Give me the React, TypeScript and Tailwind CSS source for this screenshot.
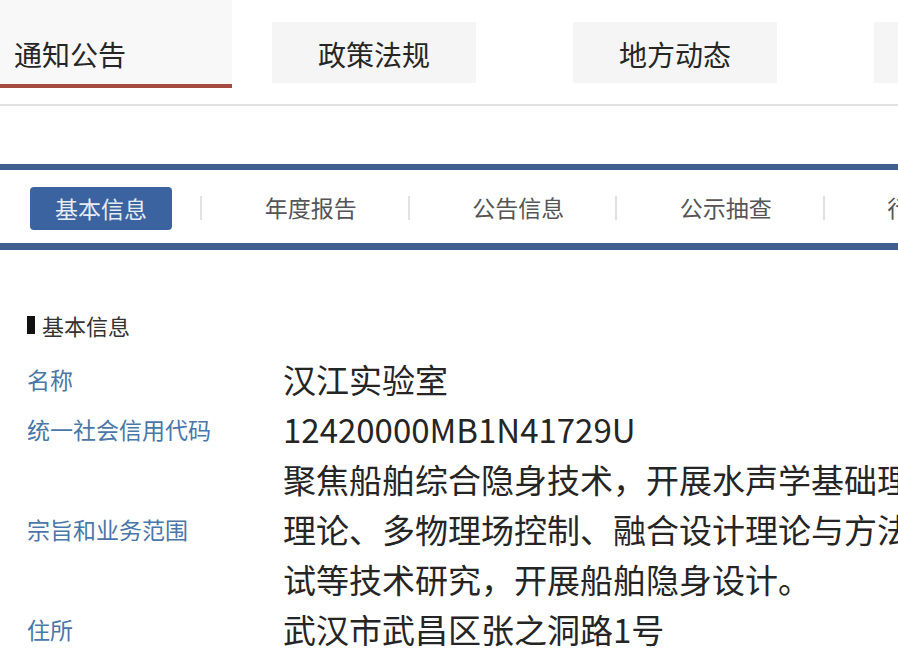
const font = { fontFamily: '"Noto Sans CJK SC", "Noto Sans", sans-serif' };

const topTabs = ['政策法规', '地方动态', '行政许可'];
const subTabs = ['年度报告', '公告信息', '公示抽查', '行政处罚'];

export default function App() {
  return (
    <div style={font} className="w-[898px] h-[655px] overflow-hidden bg-white text-[#252525]">
      {/* top channel tabs */}
      <div className="flex h-[106px] border-b-2 border-[#e2e2e2]">
        <div className="w-[232px] h-[88px] shrink-0 bg-[#f8f8f8] border-b-[4px] border-[#a44a3f] flex items-center pl-[14px] pt-[24px] text-[28px] text-[#262626]">
          通知公告
        </div>
        {topTabs.map((t, i) => (
          <div
            key={t}
            className={`${i === 0 ? 'ml-[40px]' : 'ml-[97px]'} mt-[22px] w-[204px] h-[61px] shrink-0 bg-[#f5f5f5] flex items-center justify-center pt-[3px] text-[28px] text-[#262626]`}
          >
            {t}
          </div>
        ))}
      </div>

      {/* sub nav */}
      <div className="mt-[58px] border-t-[6px] border-b-[7px] border-[#3e5f90] h-[86px] flex items-center">
        <div className="w-[200px] shrink-0 pl-[30px] pt-[4px]">
          <div className="w-[142px] h-[43px] rounded-[4px] bg-[#3b63a0] flex items-center justify-center text-[23px] text-[#e6ecf4]">
            基本信息
          </div>
        </div>
        {subTabs.map((t) => (
          <div key={t} className="w-[207.5px] shrink-0 flex items-center pt-[2px]">
            <div className="w-[2px] h-[24px] bg-[#e2e2e2] shrink-0" />
            <div className="flex-1 pl-[12px] text-center text-[23px] text-[#555] whitespace-nowrap">{t}</div>
          </div>
        ))}
      </div>

      {/* section title */}
      <div className="mt-[61px] pl-[27px] flex items-center gap-[7px]">
        <div className="w-[8px] h-[18px] bg-[#111]" />
        <div className="text-[22px] text-[#333] leading-[28px]">基本信息</div>
      </div>

      {/* info rows */}
      <div className="mt-[15px] grid grid-cols-[283px_1fr] text-[33px] leading-[50px]">
        <div className="pl-[27px] self-center text-[23px] text-[#4a76a8]">名称</div>
        <div className="whitespace-nowrap">汉江实验室</div>

        <div className="pl-[27px] self-center text-[23px] text-[#4a76a8]">统一社会信用代码</div>
        <div className="whitespace-nowrap">12420000MB1N41729U</div>

        <div className="pl-[27px] self-center text-[23px] text-[#4a76a8]">宗旨和业务范围</div>
        <div className="whitespace-nowrap">
          <div>聚焦船舶综合隐身技术，开展水声学基础理论、声学超材料</div>
          <div>理论、多物理场控制、融合设计理论与方法、测</div>
          <div>试等技术研究，开展船舶隐身设计。</div>
        </div>

        <div className="pl-[27px] self-center text-[23px] text-[#4a76a8]">住所</div>
        <div className="whitespace-nowrap">武汉市武昌区张之洞路1号</div>
      </div>
    </div>
  );
}
